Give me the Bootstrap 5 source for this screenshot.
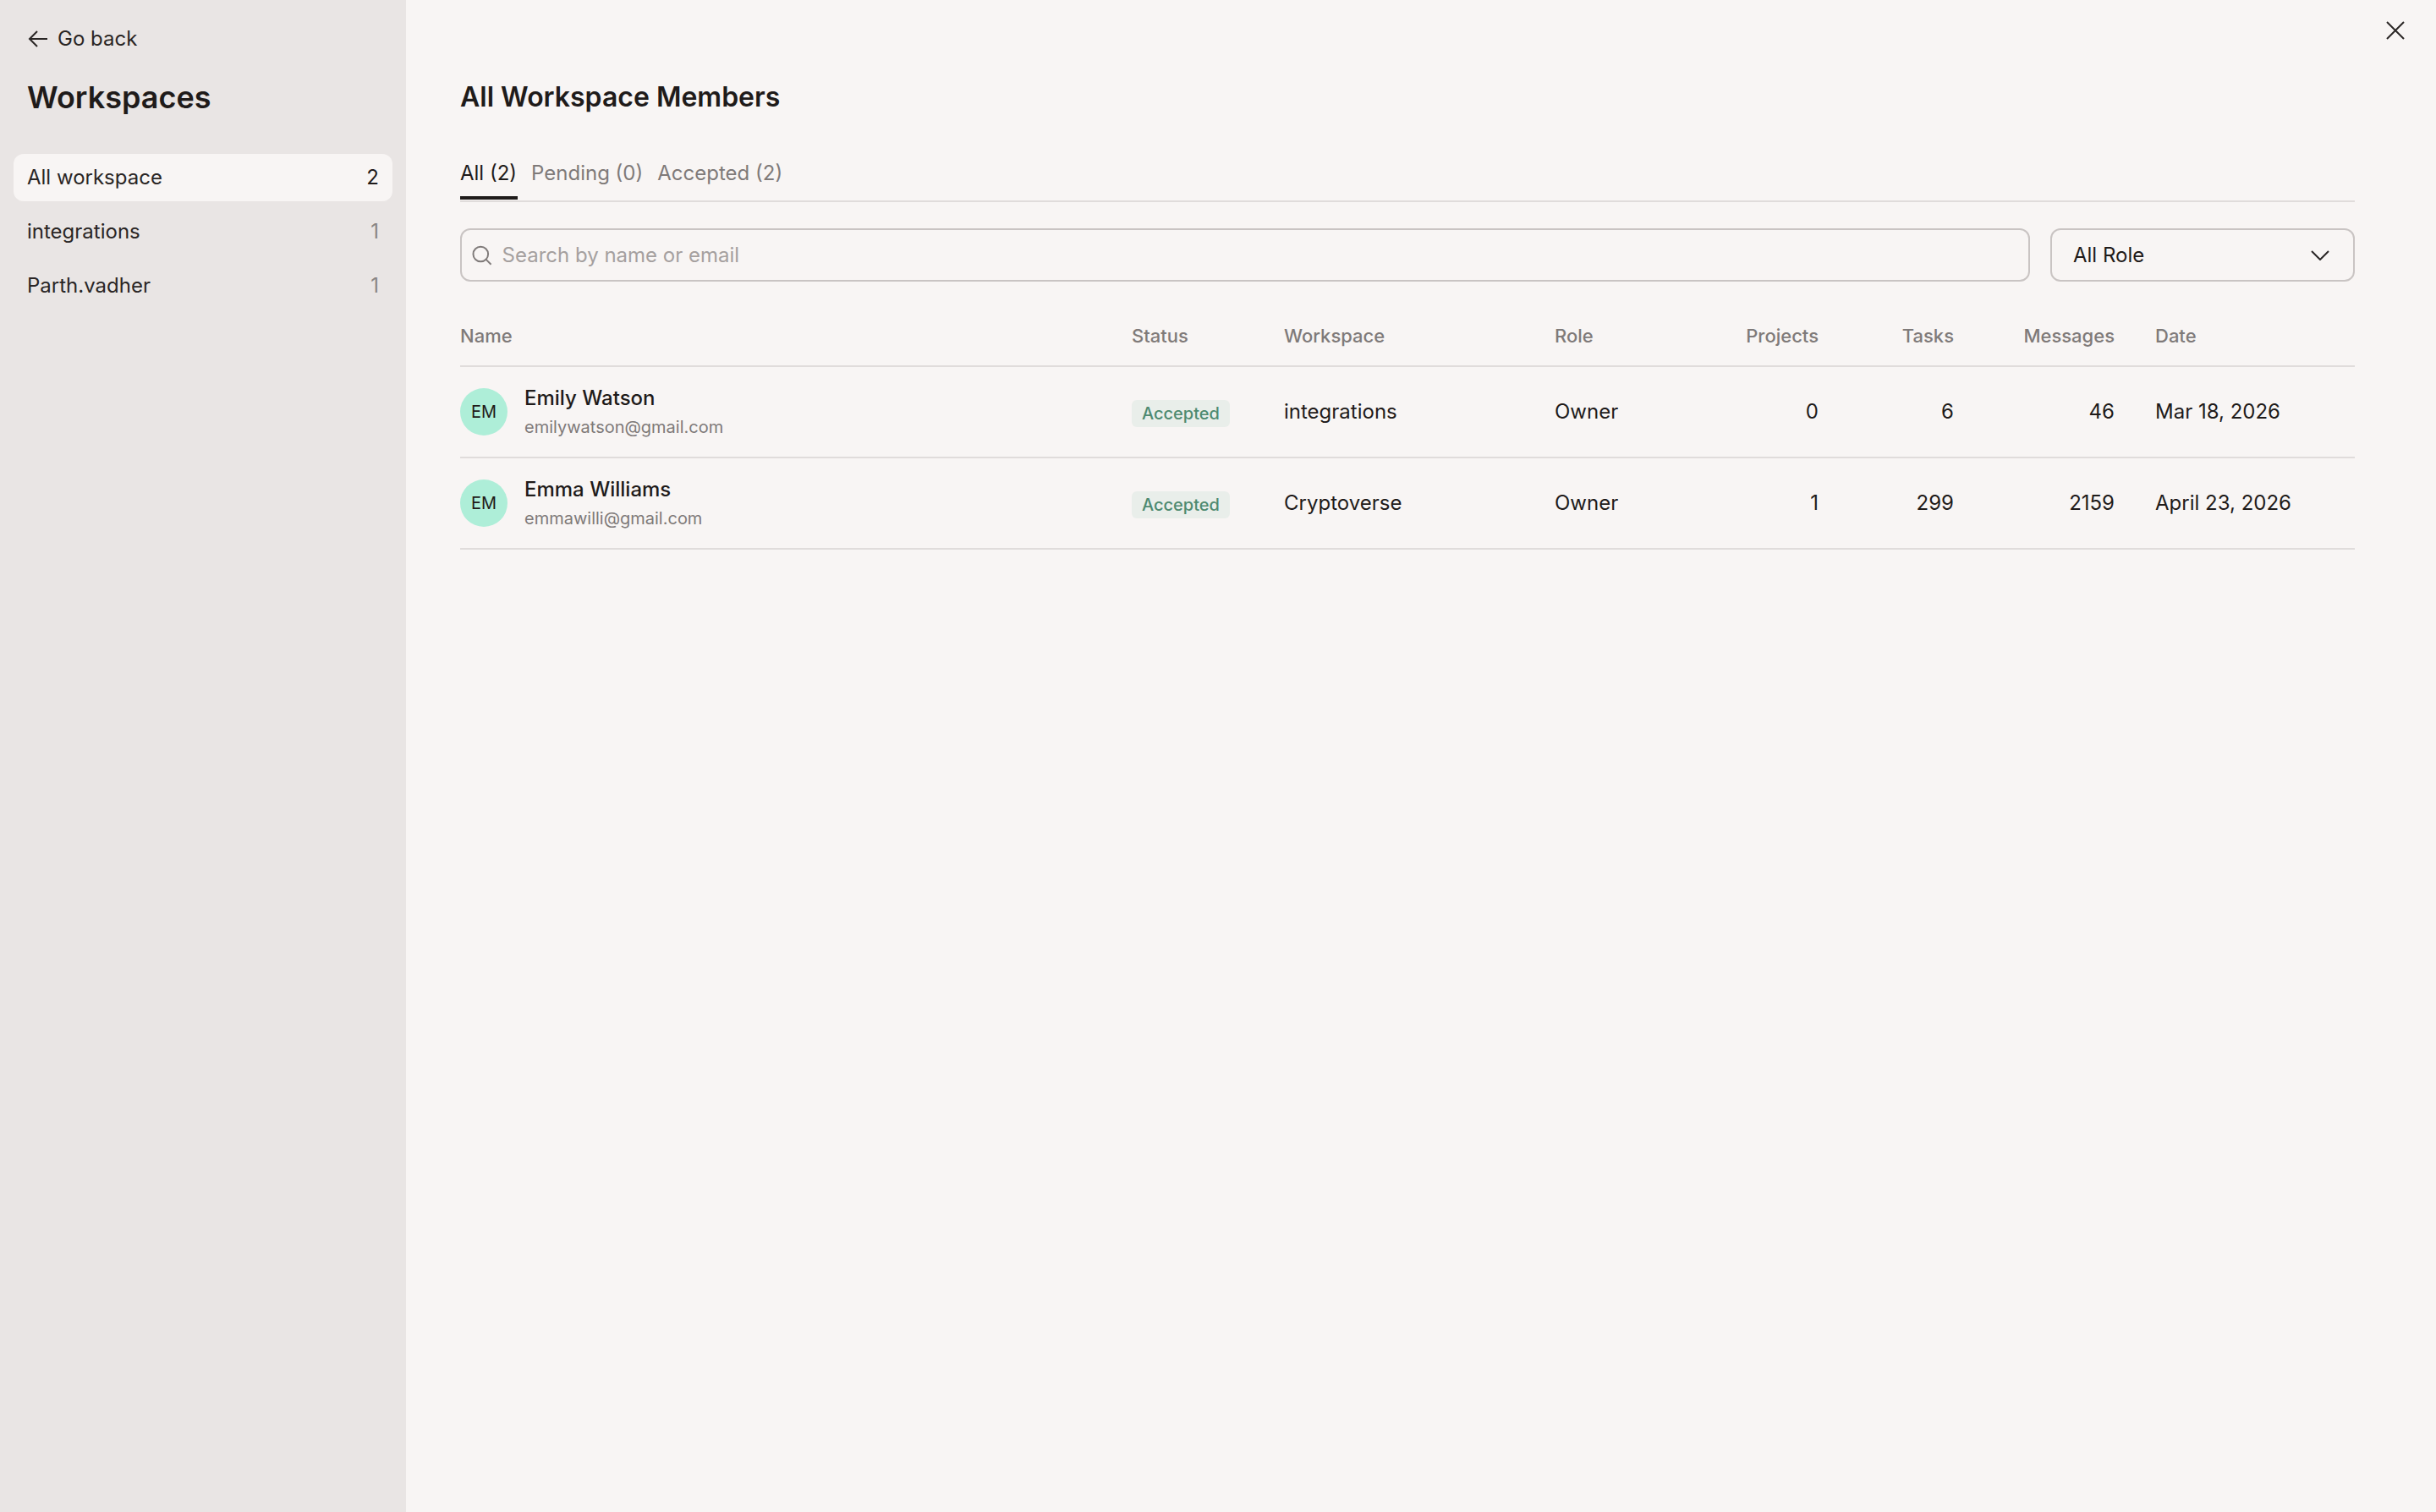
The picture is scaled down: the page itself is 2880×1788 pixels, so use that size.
<!DOCTYPE html>
<html lang="en">
<head>
  <meta charset="UTF-8" />
  <meta name="viewport" content="width=device-width, initial-scale=1.0" />
  <title>All Workspace Members</title>
  <link href="https://cdn.jsdelivr.net/npm/bootstrap@5.3.0/dist/css/bootstrap.min.css" rel="stylesheet" />
  <style>
    html, body { height: 100%; }
    body {
      font-family: Inter, "Liberation Sans", sans-serif;
      background: #f8f5f4;
      color: #1f1b1a;
      font-size: 24px;
    }
    .app-shell { min-height: 100vh; }
    .side-panel { width: 480px; background: #e9e5e4; flex-shrink: 0; }
    .back-link { color: #2a2625; font-size: 24px; line-height: 32px; padding: 30px 0 0 32px; gap: 12px; text-decoration: none; }
    .side-title { font-size: 36px; font-weight: 600; line-height: 48px; margin: 29px 0 0 32px; }
    .ws-list { padding: 43px 16px 0; gap: 8px; }
    .ws-item {
      height: 56px; padding: 0 16px; border-radius: 12px; color: #2a2625;
      font-size: 24px; text-decoration: none;
    }
    .ws-item.is-active { background: #f8f5f4; }
    .ws-count { color: #8a8584; }
    .is-active .ws-count { color: #1f1b1a; }

    .main-panel { padding: 91px 96px 0 64px; min-width: 0; }
    .close-btn { position: absolute; top: 25px; right: 37px; background: none; border: 0; padding: 0; line-height: 0; }
    .main-title { font-size: 32px; font-weight: 600; line-height: 48px; margin: 0; }
    .tab-row { margin-top: 37px; gap: 16px; border-bottom: 2px solid #e0dcdb; height: 63px; }
    .tab-item {
      color: #7f7a79; font-size: 24px; line-height: 32px; height: 60px;
      text-decoration: none; display: flex; align-items: flex-start; padding: 13px 1px 0 0;
    }
    .tab-item.is-active { color: #1f1b1a; border-bottom: 4px solid #1f1b1a; }

    .filter-row { margin-top: 31px; gap: 24px; }
    .search-box {
      height: 63px; border: 2px solid #c9c4c3; border-radius: 12px; padding: 0 12px; gap: 12px;
    }
    .search-box .form-control {
      background: transparent; border: 0; box-shadow: none; padding: 0; color: #1f1b1a; font-size: 24px;
    }
    .search-box .form-control::placeholder { color: #a5a09f; }
    .role-btn {
      width: 360px; height: 63px; border: 2px solid #c9c4c3; border-radius: 12px; background: transparent;
      padding: 0 28px 0 25px; color: #1f1b1a; font-size: 24px;
    }

    .member-table {
      table-layout: fixed; margin: 38px 0 0; width: 100%;
      --bs-table-bg: transparent; --bs-table-color: #1f1b1a;
    }
    .member-table th, .member-table td { padding: 0; vertical-align: middle; border-bottom: 2px solid #e0dcdb; }
    .member-table th { height: 62px; color: #7f7a79; font-size: 22px; font-weight: 500; padding-bottom: 8px; }
    .member-table td { height: 108px; font-size: 24px; }
    .c-name { width: 794px; }
    .c-status { width: 180px; }
    .c-work { width: 320px; }
    .c-role { width: 180px; }
    .c-proj { width: 132px; }
    .c-task { width: 160px; }
    .c-msg { width: 190px; }
    .member-table .date-cell { padding-left: 48px; }

    .avatar-dot {
      width: 56px; height: 56px; border-radius: 50%; background: #aeeed8; color: #1f1b1a;
      font-size: 20px; font-weight: 400; flex-shrink: 0;
    }
    .person-row { gap: 20px; }
    .person-name { font-size: 24px; font-weight: 500; line-height: 32px; }
    .person-mail { font-size: 20px; color: #7f7a79; line-height: 28px; margin-top: 4px; }
    .status-pill {
      display: inline-block; background: #e9eeea; color: #4e8a70; font-size: 20px; font-weight: 500;
      line-height: 32px; padding: 0 12px; border-radius: 6px; margin-top: 4px;
    }
  </style>
</head>
<body>
  <div class="app-shell d-flex position-relative">
    <!-- sidebar -->
    <aside class="side-panel d-flex flex-column">
      <a href="#" class="back-link d-flex align-items-center">
        <svg width="24" height="24" viewBox="0 0 24 24" fill="none" stroke="#2a2625" stroke-width="2"><path d="M25 12H3M12 3l-9 9 9 9"/></svg>
        Go back
      </a>
      <div class="side-title">Workspaces</div>
      <div class="ws-list d-flex flex-column">
        <a href="#" class="ws-item is-active d-flex align-items-center justify-content-between"><span>All workspace</span><span class="ws-count">2</span></a>
        <a href="#" class="ws-item d-flex align-items-center justify-content-between"><span>integrations</span><span class="ws-count">1</span></a>
        <a href="#" class="ws-item d-flex align-items-center justify-content-between"><span>Parth.vadher</span><span class="ws-count">1</span></a>
      </div>
    </aside>

    <!-- main -->
    <main class="main-panel flex-grow-1">
      <button class="close-btn" aria-label="Close">
        <svg width="22" height="22" viewBox="0 0 22 22" fill="none" stroke="#2a2625" stroke-width="2"><path d="M1 1l20 20M21 1L1 21"/></svg>
      </button>
      <h1 class="main-title">All Workspace Members</h1>

      <div class="tab-row d-flex">
        <a href="#" class="tab-item is-active">All (2)</a>
        <a href="#" class="tab-item">Pending (0)</a>
        <a href="#" class="tab-item">Accepted (2)</a>
      </div>

      <div class="filter-row d-flex">
        <div class="search-box d-flex align-items-center flex-grow-1">
          <svg width="24" height="24" viewBox="0 0 24 24" fill="none" stroke="#7f7a79" stroke-width="2"><circle cx="10.5" cy="10.5" r="9"/><path d="M17 17l6 6"/></svg>
          <input type="text" class="form-control" placeholder="Search by name or email" />
        </div>
        <button class="role-btn d-flex align-items-center justify-content-between" type="button">
          All Role
          <svg width="22" height="12" viewBox="0 0 22 12" fill="none" stroke="#2a2625" stroke-width="2"><path d="M1 1l10 10L21 1"/></svg>
        </button>
      </div>

      <table class="table member-table">
        <colgroup>
          <col class="c-name" /><col class="c-status" /><col class="c-work" /><col class="c-role" />
          <col class="c-proj" /><col class="c-task" /><col class="c-msg" /><col />
        </colgroup>
        <thead>
          <tr>
            <th>Name</th><th>Status</th><th>Workspace</th><th>Role</th>
            <th class="text-end">Projects</th><th class="text-end">Tasks</th><th class="text-end">Messages</th><th class="date-cell">Date</th>
          </tr>
        </thead>
        <tbody>
          <tr>
            <td>
              <div class="person-row d-flex align-items-center">
                <div class="avatar-dot d-flex align-items-center justify-content-center">EM</div>
                <div><div class="person-name">Emily Watson</div><div class="person-mail">emilywatson@gmail.com</div></div>
              </div>
            </td>
            <td><span class="status-pill">Accepted</span></td>
            <td>integrations</td><td>Owner</td>
            <td class="text-end">0</td><td class="text-end">6</td><td class="text-end">46</td>
            <td class="date-cell">Mar 18, 2026</td>
          </tr>
          <tr>
            <td>
              <div class="person-row d-flex align-items-center">
                <div class="avatar-dot d-flex align-items-center justify-content-center">EM</div>
                <div><div class="person-name">Emma Williams</div><div class="person-mail">emmawilli@gmail.com</div></div>
              </div>
            </td>
            <td><span class="status-pill">Accepted</span></td>
            <td>Cryptoverse</td><td>Owner</td>
            <td class="text-end">1</td><td class="text-end">299</td><td class="text-end">2159</td>
            <td class="date-cell">April 23, 2026</td>
          </tr>
        </tbody>
      </table>
    </main>
  </div>
  <script src="https://cdn.jsdelivr.net/npm/bootstrap@5.3.0/dist/js/bootstrap.bundle.min.js"></script>
</body>
</html>
